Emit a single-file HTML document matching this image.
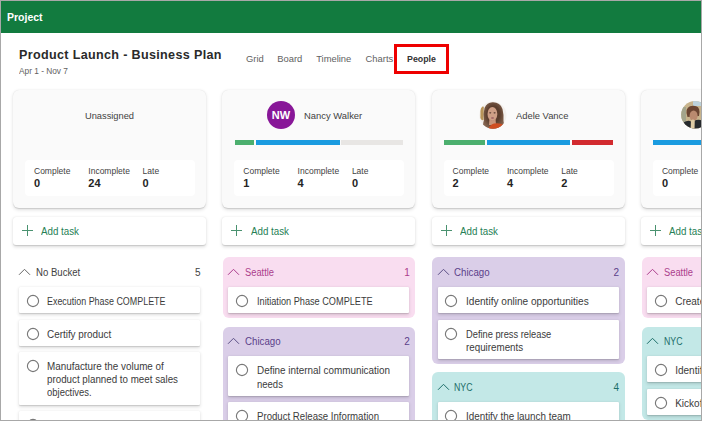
<!DOCTYPE html><html><head><meta charset="utf-8"><style>
html,body{margin:0;padding:0;background:#fff;}
#c{position:absolute;left:0;top:0;width:702px;height:421px;overflow:hidden;background:#fff;font-family:"Liberation Sans",sans-serif;}
.t{position:absolute;white-space:nowrap;}
.b{position:absolute;box-sizing:border-box;}
#frame{position:absolute;left:0;top:0;width:702px;height:421px;box-sizing:border-box;border:1px solid #a8a8a8;z-index:50;}
.card{position:absolute;top:89.5px;width:193px;height:118.5px;background:#fafafa;border-radius:6px;box-shadow:0 1.6px 3.6px rgba(0,0,0,.13),0 0.3px 0.9px rgba(0,0,0,.11);}
.stats{position:absolute;top:159.5px;width:170px;height:36.5px;background:#fff;border-radius:4px;}
.add{position:absolute;top:216.5px;width:193px;height:28px;background:#fff;border-radius:3px;box-shadow:0 1.6px 3.6px rgba(0,0,0,.14),0 0.3px 0.9px rgba(0,0,0,.11);}
.bk{position:absolute;width:192.4px;border-radius:6px;}
.tk{position:absolute;width:181px;background:#fff;border-radius:1px;box-shadow:0 1.6px 3.6px rgba(0,0,0,.14),0 0.3px 0.9px rgba(0,0,0,.11);}
.circ{position:absolute;width:9.8px;height:9.8px;border:1.2px solid #6e6e6e;border-radius:50%;}
</style></head><body><div id="c">
<div class="b" style="left:0;top:0;width:702px;height:33px;background:#127b3f;"></div>
<div class="t" style="left:7px;top:10.86px;font-size:10.5px;line-height:12.6px;color:#ffffff;font-weight:700;">Project</div>
<div class="t" style="left:19px;top:46.81px;font-size:13.2px;line-height:15.84px;color:#2a2a2a;font-weight:700;letter-spacing:0.35px;transform:scaleX(0.9533);transform-origin:0 0;">Product Launch - Business Plan</div>
<div class="t" style="left:19px;top:66.06px;font-size:8.6px;line-height:10.32px;color:#616161;font-weight:400;transform:scaleX(0.9671);transform-origin:0 0;">Apr 1 - Nov 7</div>
<div class="t" style="left:246px;top:52.50px;font-size:9.4px;line-height:11.28px;color:#616161;font-weight:400;">Grid</div>
<div class="t" style="left:277.3px;top:52.50px;font-size:9.4px;line-height:11.28px;color:#616161;font-weight:400;">Board</div>
<div class="t" style="left:316.2px;top:52.50px;font-size:9.4px;line-height:11.28px;color:#616161;font-weight:400;">Timeline</div>
<div class="t" style="left:365.6px;top:52.50px;font-size:9.4px;line-height:11.28px;color:#616161;font-weight:400;">Charts</div>
<div class="t" style="left:406.7px;top:52.70px;font-size:9.4px;line-height:11.28px;color:#333333;font-weight:700;transform:scaleX(0.9409);transform-origin:0 0;">People</div>
<div class="b" style="left:394px;top:44px;width:55px;height:30px;border:3px solid #ee0000;"></div>
<div class="card" style="left:13px;"></div>
<div class="stats" style="left:25px;"></div>
<div class="t" style="left:34.0px;top:166.45px;font-size:8.5px;line-height:10.2px;color:#424242;font-weight:400;">Complete</div>
<div class="t" style="left:34.0px;top:176.89px;font-size:11px;line-height:13.2px;color:#242424;font-weight:700;">0</div>
<div class="t" style="left:88.3px;top:166.45px;font-size:8.5px;line-height:10.2px;color:#424242;font-weight:400;">Incomplete</div>
<div class="t" style="left:88.3px;top:176.89px;font-size:11px;line-height:13.2px;color:#242424;font-weight:700;">24</div>
<div class="t" style="left:142.6px;top:166.45px;font-size:8.5px;line-height:10.2px;color:#424242;font-weight:400;">Late</div>
<div class="t" style="left:142.6px;top:176.89px;font-size:11px;line-height:13.2px;color:#242424;font-weight:700;">0</div>
<div class="add" style="left:13px;"></div>
<div class="b" style="left:22px;top:230px;width:11px;height:1px;background:#4a9270;"></div>
<div class="b" style="left:27px;top:225px;width:1px;height:11px;background:#4a9270;"></div>
<div class="t" style="left:41.3px;top:225.63px;font-size:10px;line-height:12.0px;color:#268055;font-weight:400;transform:scaleX(0.9766);transform-origin:0 0;">Add task</div>
<div class="card" style="left:222.3px;"></div>
<div class="stats" style="left:234.3px;"></div>
<div class="t" style="left:243.3px;top:166.45px;font-size:8.5px;line-height:10.2px;color:#424242;font-weight:400;">Complete</div>
<div class="t" style="left:243.3px;top:176.89px;font-size:11px;line-height:13.2px;color:#242424;font-weight:700;">1</div>
<div class="t" style="left:297.6px;top:166.45px;font-size:8.5px;line-height:10.2px;color:#424242;font-weight:400;">Incomplete</div>
<div class="t" style="left:297.6px;top:176.89px;font-size:11px;line-height:13.2px;color:#242424;font-weight:700;">4</div>
<div class="t" style="left:351.9px;top:166.45px;font-size:8.5px;line-height:10.2px;color:#424242;font-weight:400;">Late</div>
<div class="t" style="left:351.9px;top:176.89px;font-size:11px;line-height:13.2px;color:#242424;font-weight:700;">0</div>
<div class="add" style="left:222.3px;"></div>
<div class="b" style="left:231.3px;top:230px;width:11px;height:1px;background:#4a9270;"></div>
<div class="b" style="left:236.3px;top:225px;width:1px;height:11px;background:#4a9270;"></div>
<div class="t" style="left:250.60000000000002px;top:225.63px;font-size:10px;line-height:12.0px;color:#268055;font-weight:400;transform:scaleX(0.9766);transform-origin:0 0;">Add task</div>
<div class="card" style="left:431.6px;"></div>
<div class="stats" style="left:443.6px;"></div>
<div class="t" style="left:452.6px;top:166.45px;font-size:8.5px;line-height:10.2px;color:#424242;font-weight:400;">Complete</div>
<div class="t" style="left:452.6px;top:176.89px;font-size:11px;line-height:13.2px;color:#242424;font-weight:700;">2</div>
<div class="t" style="left:506.90000000000003px;top:166.45px;font-size:8.5px;line-height:10.2px;color:#424242;font-weight:400;">Incomplete</div>
<div class="t" style="left:506.90000000000003px;top:176.89px;font-size:11px;line-height:13.2px;color:#242424;font-weight:700;">4</div>
<div class="t" style="left:561.2px;top:166.45px;font-size:8.5px;line-height:10.2px;color:#424242;font-weight:400;">Late</div>
<div class="t" style="left:561.2px;top:176.89px;font-size:11px;line-height:13.2px;color:#242424;font-weight:700;">2</div>
<div class="add" style="left:431.6px;"></div>
<div class="b" style="left:440.6px;top:230px;width:11px;height:1px;background:#4a9270;"></div>
<div class="b" style="left:445.6px;top:225px;width:1px;height:11px;background:#4a9270;"></div>
<div class="t" style="left:459.90000000000003px;top:225.63px;font-size:10px;line-height:12.0px;color:#268055;font-weight:400;transform:scaleX(0.9766);transform-origin:0 0;">Add task</div>
<div class="card" style="left:640.9px;"></div>
<div class="stats" style="left:652.9px;"></div>
<div class="t" style="left:661.9px;top:166.45px;font-size:8.5px;line-height:10.2px;color:#424242;font-weight:400;">Complete</div>
<div class="t" style="left:661.9px;top:176.89px;font-size:11px;line-height:13.2px;color:#242424;font-weight:700;">0</div>
<div class="t" style="left:716.1999999999999px;top:166.45px;font-size:8.5px;line-height:10.2px;color:#424242;font-weight:400;">Incomplete</div>
<div class="t" style="left:716.1999999999999px;top:176.89px;font-size:11px;line-height:13.2px;color:#242424;font-weight:700;">4</div>
<div class="t" style="left:770.5px;top:166.45px;font-size:8.5px;line-height:10.2px;color:#424242;font-weight:400;">Late</div>
<div class="t" style="left:770.5px;top:176.89px;font-size:11px;line-height:13.2px;color:#242424;font-weight:700;">0</div>
<div class="add" style="left:640.9px;"></div>
<div class="b" style="left:649.9px;top:230px;width:11px;height:1px;background:#4a9270;"></div>
<div class="b" style="left:654.9px;top:225px;width:1px;height:11px;background:#4a9270;"></div>
<div class="t" style="left:669.1999999999999px;top:225.63px;font-size:10px;line-height:12.0px;color:#268055;font-weight:400;transform:scaleX(0.9766);transform-origin:0 0;">Add task</div>
<div class="t" style="left:9.5px;width:200px;text-align:center;top:110.50px;font-size:9.3px;line-height:11.16px;color:#424242;font-weight:400;">Unassigned</div>
<div class="b" style="left:267px;top:101px;width:28px;height:28px;border-radius:50%;background:#881798;"></div>
<div class="t" style="left:181px;width:200px;text-align:center;top:109.29px;font-size:11px;line-height:13.2px;color:#ffffff;font-weight:700;">NW</div>
<div class="t" style="left:303.8px;top:110.21px;font-size:9.5px;line-height:11.4px;color:#424242;font-weight:400;transform:scaleX(0.9902);transform-origin:0 0;">Nancy Walker</div>
<div class="t" style="left:515.5px;top:110.21px;font-size:9.5px;line-height:11.4px;color:#424242;font-weight:400;transform:scaleX(0.9874);transform-origin:0 0;">Adele Vance</div>
<div class="b" style="left:234.5px;top:140px;width:19.69999999999999px;height:4.5px;background:#4caf6e;"></div>
<div class="b" style="left:256px;top:140px;width:83.69999999999999px;height:4.5px;background:#1a9be0;"></div>
<div class="b" style="left:341.4px;top:140px;width:61.900000000000034px;height:4.5px;background:#e8e6e4;"></div>
<div class="b" style="left:443.8px;top:140px;width:41.30000000000001px;height:4.5px;background:#4caf6e;"></div>
<div class="b" style="left:486.7px;top:140px;width:83.50000000000006px;height:4.5px;background:#1a9be0;"></div>
<div class="b" style="left:571.6px;top:140px;width:41.39999999999998px;height:4.5px;background:#d22a2f;"></div>
<div class="b" style="left:653.2px;top:140px;width:48.799999999999955px;height:4.5px;background:#1a9be0;"></div>
<svg class="b" style="left:479px;top:101px;" width="28" height="28" viewBox="0 0 28 28"><defs><clipPath id="ca"><circle cx="13.9" cy="14.2" r="13.6"/></clipPath>
<radialGradient id="hg" cx="0.5" cy="0.45" r="0.6"><stop offset="0.5" stop-color="#5a3c2c"/><stop offset="1" stop-color="#8a6a55"/></radialGradient></defs>
<g clip-path="url(#ca)"><rect width="28" height="28" fill="#f3f0ed"/>
<path d="M1.5 7 Q3.5 4 4.8 6 L4.6 19 Q2.5 20 1.4 17Z" fill="#b89458"/>
<path d="M13.5 1.3 Q21 1 23.5 8 Q25 14 24.5 20 Q26 25 22 28 L5 28 Q3 24 5 19 Q4 12 5.5 7 Q8 1.5 13.5 1.3Z" fill="url(#hg)"/>
<ellipse cx="13.4" cy="13" rx="4.9" ry="7" fill="#cf9f86"/>
<path d="M10.5 17 Q13.4 22 16.5 17 L17 24 L10 24Z" fill="#c9967c"/>
<ellipse cx="11.2" cy="11.8" rx="1.1" ry="0.6" fill="#4a3028"/><ellipse cx="15.6" cy="11.8" rx="1.1" ry="0.6" fill="#4a3028"/>
<ellipse cx="13.5" cy="17" rx="1.6" ry="0.7" fill="#9a5a60"/>
<path d="M9 28 Q11 23.5 15 22.5 Q21 21.5 25 24 L26 28Z" fill="#cf4e22"/>
</g></svg>
<svg class="b" style="left:681px;top:101px;" width="28" height="28" viewBox="0 0 28 28"><defs><clipPath id="cb"><circle cx="14" cy="13.8" r="13.8"/></clipPath></defs>
<g clip-path="url(#cb)"><rect width="28" height="28" fill="#c7b38c"/><rect x="0" y="6" width="5" height="15" fill="#a3a58c"/><rect x="12" y="0" width="12" height="5" fill="#bcd2dc"/>
<path d="M5.5 12 Q5 5 12 4.8 Q18.5 4.5 18.5 11 L18 15 L6.5 16Z" fill="#6a4532"/>
<ellipse cx="12.6" cy="14.8" rx="4" ry="5.2" fill="#b98a6f"/>
<path d="M1 28 L2.5 21.5 Q7 18.5 10 20.5 L13 20 Q17 18 21 19.5 L24 28Z" fill="#25292d"/>
<path d="M9.6 28 L10 19.5 Q12 17.5 13.8 19.5 L13.5 28Z" fill="#ddcaa4"/></g></svg>
<svg class="b" style="left:18px;top:268px;" width="13" height="8" viewBox="0 0 13 8"><path d="M1 6.8 L6.5 1.3 L12 6.8" fill="none" stroke="#666666" stroke-width="1"/></svg>
<div class="t" style="left:35.6px;top:267.04px;font-size:10px;line-height:12.0px;color:#424242;font-weight:400;transform:scaleX(0.9581);transform-origin:0 0;">No Bucket</div>
<div class="t" style="right:501.5px;text-align:right;top:267.04px;font-size:10px;line-height:12.0px;color:#424242;font-weight:400;">5</div>
<div class="tk" style="left:19px;top:287px;height:26.200000000000003px;"></div>
<svg class="b" style="left:25.8px;top:294px;" width="14" height="14" viewBox="0 0 14 14"><circle cx="7" cy="7" r="5.6" fill="none" stroke="#787878" stroke-width="1.15"/></svg>
<div class="t" style="left:47.3px;top:296.04px;font-size:10px;line-height:12.0px;color:#3b3b3b;font-weight:400;transform:scaleX(0.8920);transform-origin:0 0;">Execution Phase COMPLETE</div>
<div class="tk" style="left:19px;top:319.5px;height:26.200000000000003px;"></div>
<svg class="b" style="left:25.8px;top:326.5px;" width="14" height="14" viewBox="0 0 14 14"><circle cx="7" cy="7" r="5.6" fill="none" stroke="#787878" stroke-width="1.15"/></svg>
<div class="t" style="left:47.3px;top:328.54px;font-size:10px;line-height:12.0px;color:#3b3b3b;font-weight:400;transform:scaleX(0.9888);transform-origin:0 0;">Certify product</div>
<div class="tk" style="left:19px;top:352.0px;height:52.800000000000004px;"></div>
<svg class="b" style="left:25.8px;top:359.0px;" width="14" height="14" viewBox="0 0 14 14"><circle cx="7" cy="7" r="5.6" fill="none" stroke="#787878" stroke-width="1.15"/></svg>
<div class="t" style="left:47.3px;top:361.04px;font-size:10px;line-height:12.0px;color:#3b3b3b;font-weight:400;transform:scaleX(0.9865);transform-origin:0 0;">Manufacture the volume of</div>
<div class="t" style="left:47.3px;top:374.24px;font-size:10px;line-height:12.0px;color:#3b3b3b;font-weight:400;transform:scaleX(0.9778);transform-origin:0 0;">product planned to meet sales</div>
<div class="t" style="left:47.3px;top:387.44px;font-size:10px;line-height:12.0px;color:#3b3b3b;font-weight:400;transform:scaleX(0.9461);transform-origin:0 0;">objectives.</div>
<div class="tk" style="left:19px;top:411.1px;height:26.200000000000003px;"></div>
<svg class="b" style="left:25.8px;top:418.1px;" width="14" height="14" viewBox="0 0 14 14"><circle cx="7" cy="7" r="5.6" fill="none" stroke="#787878" stroke-width="1.15"/></svg>
<div class="t" style="left:47.3px;top:420.14px;font-size:10px;line-height:12.0px;color:#3b3b3b;font-weight:400;"> </div>
<div class="bk" style="left:222.9px;top:257.4px;height:61.1px;background:#f9ddf0;"></div>
<svg class="b" style="left:227.3px;top:268px;" width="13" height="8" viewBox="0 0 13 8"><path d="M1 6.8 L6.5 1.3 L12 6.8" fill="none" stroke="#ab3d8c" stroke-width="1"/></svg>
<div class="t" style="left:244.9px;top:267.04px;font-size:10px;line-height:12.0px;color:#ab3d8c;font-weight:400;transform:scaleX(0.9315);transform-origin:0 0;">Seattle</div>
<div class="t" style="right:292.2px;text-align:right;top:267.04px;font-size:10px;line-height:12.0px;color:#ab3d8c;font-weight:400;">1</div>
<div class="tk" style="left:228.3px;top:287px;height:26.200000000000003px;"></div>
<svg class="b" style="left:235.10000000000002px;top:294px;" width="14" height="14" viewBox="0 0 14 14"><circle cx="7" cy="7" r="5.6" fill="none" stroke="#787878" stroke-width="1.15"/></svg>
<div class="t" style="left:256.6px;top:296.04px;font-size:10px;line-height:12.0px;color:#3b3b3b;font-weight:400;transform:scaleX(0.9170);transform-origin:0 0;">Initiation Phase COMPLETE</div>
<div class="bk" style="left:222.9px;top:326.7px;height:106.9px;background:#dacee8;"></div>
<svg class="b" style="left:227.3px;top:337.3px;" width="13" height="8" viewBox="0 0 13 8"><path d="M1 6.8 L6.5 1.3 L12 6.8" fill="none" stroke="#5c5086" stroke-width="1"/></svg>
<div class="t" style="left:244.9px;top:336.34px;font-size:10px;line-height:12.0px;color:#5a3f8a;font-weight:400;transform:scaleX(0.9703);transform-origin:0 0;">Chicago</div>
<div class="t" style="right:292.2px;text-align:right;top:336.34px;font-size:10px;line-height:12.0px;color:#5a3f8a;font-weight:400;">2</div>
<div class="tk" style="left:228.3px;top:356.3px;height:39.5px;"></div>
<svg class="b" style="left:235.10000000000002px;top:363.3px;" width="14" height="14" viewBox="0 0 14 14"><circle cx="7" cy="7" r="5.6" fill="none" stroke="#787878" stroke-width="1.15"/></svg>
<div class="t" style="left:256.6px;top:365.34px;font-size:10px;line-height:12.0px;color:#3b3b3b;font-weight:400;transform:scaleX(0.9887);transform-origin:0 0;">Define internal communication</div>
<div class="t" style="left:256.6px;top:378.54px;font-size:10px;line-height:12.0px;color:#3b3b3b;font-weight:400;transform:scaleX(0.9506);transform-origin:0 0;">needs</div>
<div class="tk" style="left:228.3px;top:402.1px;height:26.200000000000003px;"></div>
<svg class="b" style="left:235.10000000000002px;top:409.1px;" width="14" height="14" viewBox="0 0 14 14"><circle cx="7" cy="7" r="5.6" fill="none" stroke="#787878" stroke-width="1.15"/></svg>
<div class="t" style="left:256.6px;top:411.14px;font-size:10px;line-height:12.0px;color:#3b3b3b;font-weight:400;transform:scaleX(0.9626);transform-origin:0 0;">Product Release Information</div>
<div class="bk" style="left:432.20000000000005px;top:257.4px;height:106.9px;background:#dacee8;"></div>
<svg class="b" style="left:436.6px;top:268px;" width="13" height="8" viewBox="0 0 13 8"><path d="M1 6.8 L6.5 1.3 L12 6.8" fill="none" stroke="#5c5086" stroke-width="1"/></svg>
<div class="t" style="left:454.20000000000005px;top:267.04px;font-size:10px;line-height:12.0px;color:#5a3f8a;font-weight:400;transform:scaleX(0.9703);transform-origin:0 0;">Chicago</div>
<div class="t" style="right:82.89999999999998px;text-align:right;top:267.04px;font-size:10px;line-height:12.0px;color:#5a3f8a;font-weight:400;">2</div>
<div class="tk" style="left:437.6px;top:287px;height:26.200000000000003px;"></div>
<svg class="b" style="left:444.40000000000003px;top:294px;" width="14" height="14" viewBox="0 0 14 14"><circle cx="7" cy="7" r="5.6" fill="none" stroke="#787878" stroke-width="1.15"/></svg>
<div class="t" style="left:465.90000000000003px;top:296.04px;font-size:10px;line-height:12.0px;color:#3b3b3b;font-weight:400;transform:scaleX(1.0078);transform-origin:0 0;">Identify online opportunities</div>
<div class="tk" style="left:437.6px;top:319.5px;height:39.5px;"></div>
<svg class="b" style="left:444.40000000000003px;top:326.5px;" width="14" height="14" viewBox="0 0 14 14"><circle cx="7" cy="7" r="5.6" fill="none" stroke="#787878" stroke-width="1.15"/></svg>
<div class="t" style="left:465.90000000000003px;top:328.54px;font-size:10px;line-height:12.0px;color:#3b3b3b;font-weight:400;transform:scaleX(0.9290);transform-origin:0 0;">Define press release</div>
<div class="t" style="left:465.90000000000003px;top:341.74px;font-size:10px;line-height:12.0px;color:#3b3b3b;font-weight:400;transform:scaleX(0.9801);transform-origin:0 0;">requirements</div>
<div class="bk" style="left:432.20000000000005px;top:372.0px;height:93.6px;background:#c3e8e7;"></div>
<svg class="b" style="left:436.6px;top:382.6px;" width="13" height="8" viewBox="0 0 13 8"><path d="M1 6.8 L6.5 1.3 L12 6.8" fill="none" stroke="#1d6e69" stroke-width="1"/></svg>
<div class="t" style="left:454.20000000000005px;top:381.64px;font-size:10px;line-height:12.0px;color:#1d6e69;font-weight:400;transform:scaleX(0.8762);transform-origin:0 0;">NYC</div>
<div class="t" style="right:82.89999999999998px;text-align:right;top:381.64px;font-size:10px;line-height:12.0px;color:#1d6e69;font-weight:400;">4</div>
<div class="tk" style="left:437.6px;top:401.6px;height:26.200000000000003px;"></div>
<svg class="b" style="left:444.40000000000003px;top:408.6px;" width="14" height="14" viewBox="0 0 14 14"><circle cx="7" cy="7" r="5.6" fill="none" stroke="#787878" stroke-width="1.15"/></svg>
<div class="t" style="left:465.90000000000003px;top:410.64px;font-size:10px;line-height:12.0px;color:#3b3b3b;font-weight:400;transform:scaleX(0.9851);transform-origin:0 0;">Identify the launch team</div>
<div class="tk" style="left:437.6px;top:434.1px;height:26.200000000000003px;"></div>
<svg class="b" style="left:444.40000000000003px;top:441.1px;" width="14" height="14" viewBox="0 0 14 14"><circle cx="7" cy="7" r="5.6" fill="none" stroke="#787878" stroke-width="1.15"/></svg>
<div class="t" style="left:465.90000000000003px;top:443.14px;font-size:10px;line-height:12.0px;color:#3b3b3b;font-weight:400;">Kickoff</div>
<div class="bk" style="left:641.5px;top:257.4px;height:61.1px;background:#f9ddf0;"></div>
<svg class="b" style="left:645.9px;top:268px;" width="13" height="8" viewBox="0 0 13 8"><path d="M1 6.8 L6.5 1.3 L12 6.8" fill="none" stroke="#ab3d8c" stroke-width="1"/></svg>
<div class="t" style="left:663.5px;top:267.04px;font-size:10px;line-height:12.0px;color:#ab3d8c;font-weight:400;transform:scaleX(0.9315);transform-origin:0 0;">Seattle</div>
<div class="t" style="right:-126.39999999999998px;text-align:right;top:267.04px;font-size:10px;line-height:12.0px;color:#ab3d8c;font-weight:400;">1</div>
<div class="tk" style="left:646.9px;top:287px;height:26.200000000000003px;"></div>
<svg class="b" style="left:653.6999999999999px;top:294px;" width="14" height="14" viewBox="0 0 14 14"><circle cx="7" cy="7" r="5.6" fill="none" stroke="#787878" stroke-width="1.15"/></svg>
<div class="t" style="left:675.1999999999999px;top:296.04px;font-size:10px;line-height:12.0px;color:#3b3b3b;font-weight:400;">Create marketing plan</div>
<div class="bk" style="left:641.5px;top:326.7px;height:93.6px;background:#c3e8e7;"></div>
<svg class="b" style="left:645.9px;top:337.3px;" width="13" height="8" viewBox="0 0 13 8"><path d="M1 6.8 L6.5 1.3 L12 6.8" fill="none" stroke="#1d6e69" stroke-width="1"/></svg>
<div class="t" style="left:663.5px;top:336.34px;font-size:10px;line-height:12.0px;color:#1d6e69;font-weight:400;transform:scaleX(0.8762);transform-origin:0 0;">NYC</div>
<div class="t" style="right:-126.39999999999998px;text-align:right;top:336.34px;font-size:10px;line-height:12.0px;color:#1d6e69;font-weight:400;">4</div>
<div class="tk" style="left:646.9px;top:356.3px;height:26.200000000000003px;"></div>
<svg class="b" style="left:653.6999999999999px;top:363.3px;" width="14" height="14" viewBox="0 0 14 14"><circle cx="7" cy="7" r="5.6" fill="none" stroke="#787878" stroke-width="1.15"/></svg>
<div class="t" style="left:675.1999999999999px;top:365.34px;font-size:10px;line-height:12.0px;color:#3b3b3b;font-weight:400;">Identify target market</div>
<div class="tk" style="left:646.9px;top:388.8px;height:26.200000000000003px;"></div>
<svg class="b" style="left:653.6999999999999px;top:395.8px;" width="14" height="14" viewBox="0 0 14 14"><circle cx="7" cy="7" r="5.6" fill="none" stroke="#787878" stroke-width="1.15"/></svg>
<div class="t" style="left:675.1999999999999px;top:397.84px;font-size:10px;line-height:12.0px;color:#3b3b3b;font-weight:400;">Kickoff meeting</div>
</div><div id="frame"></div></body></html>
